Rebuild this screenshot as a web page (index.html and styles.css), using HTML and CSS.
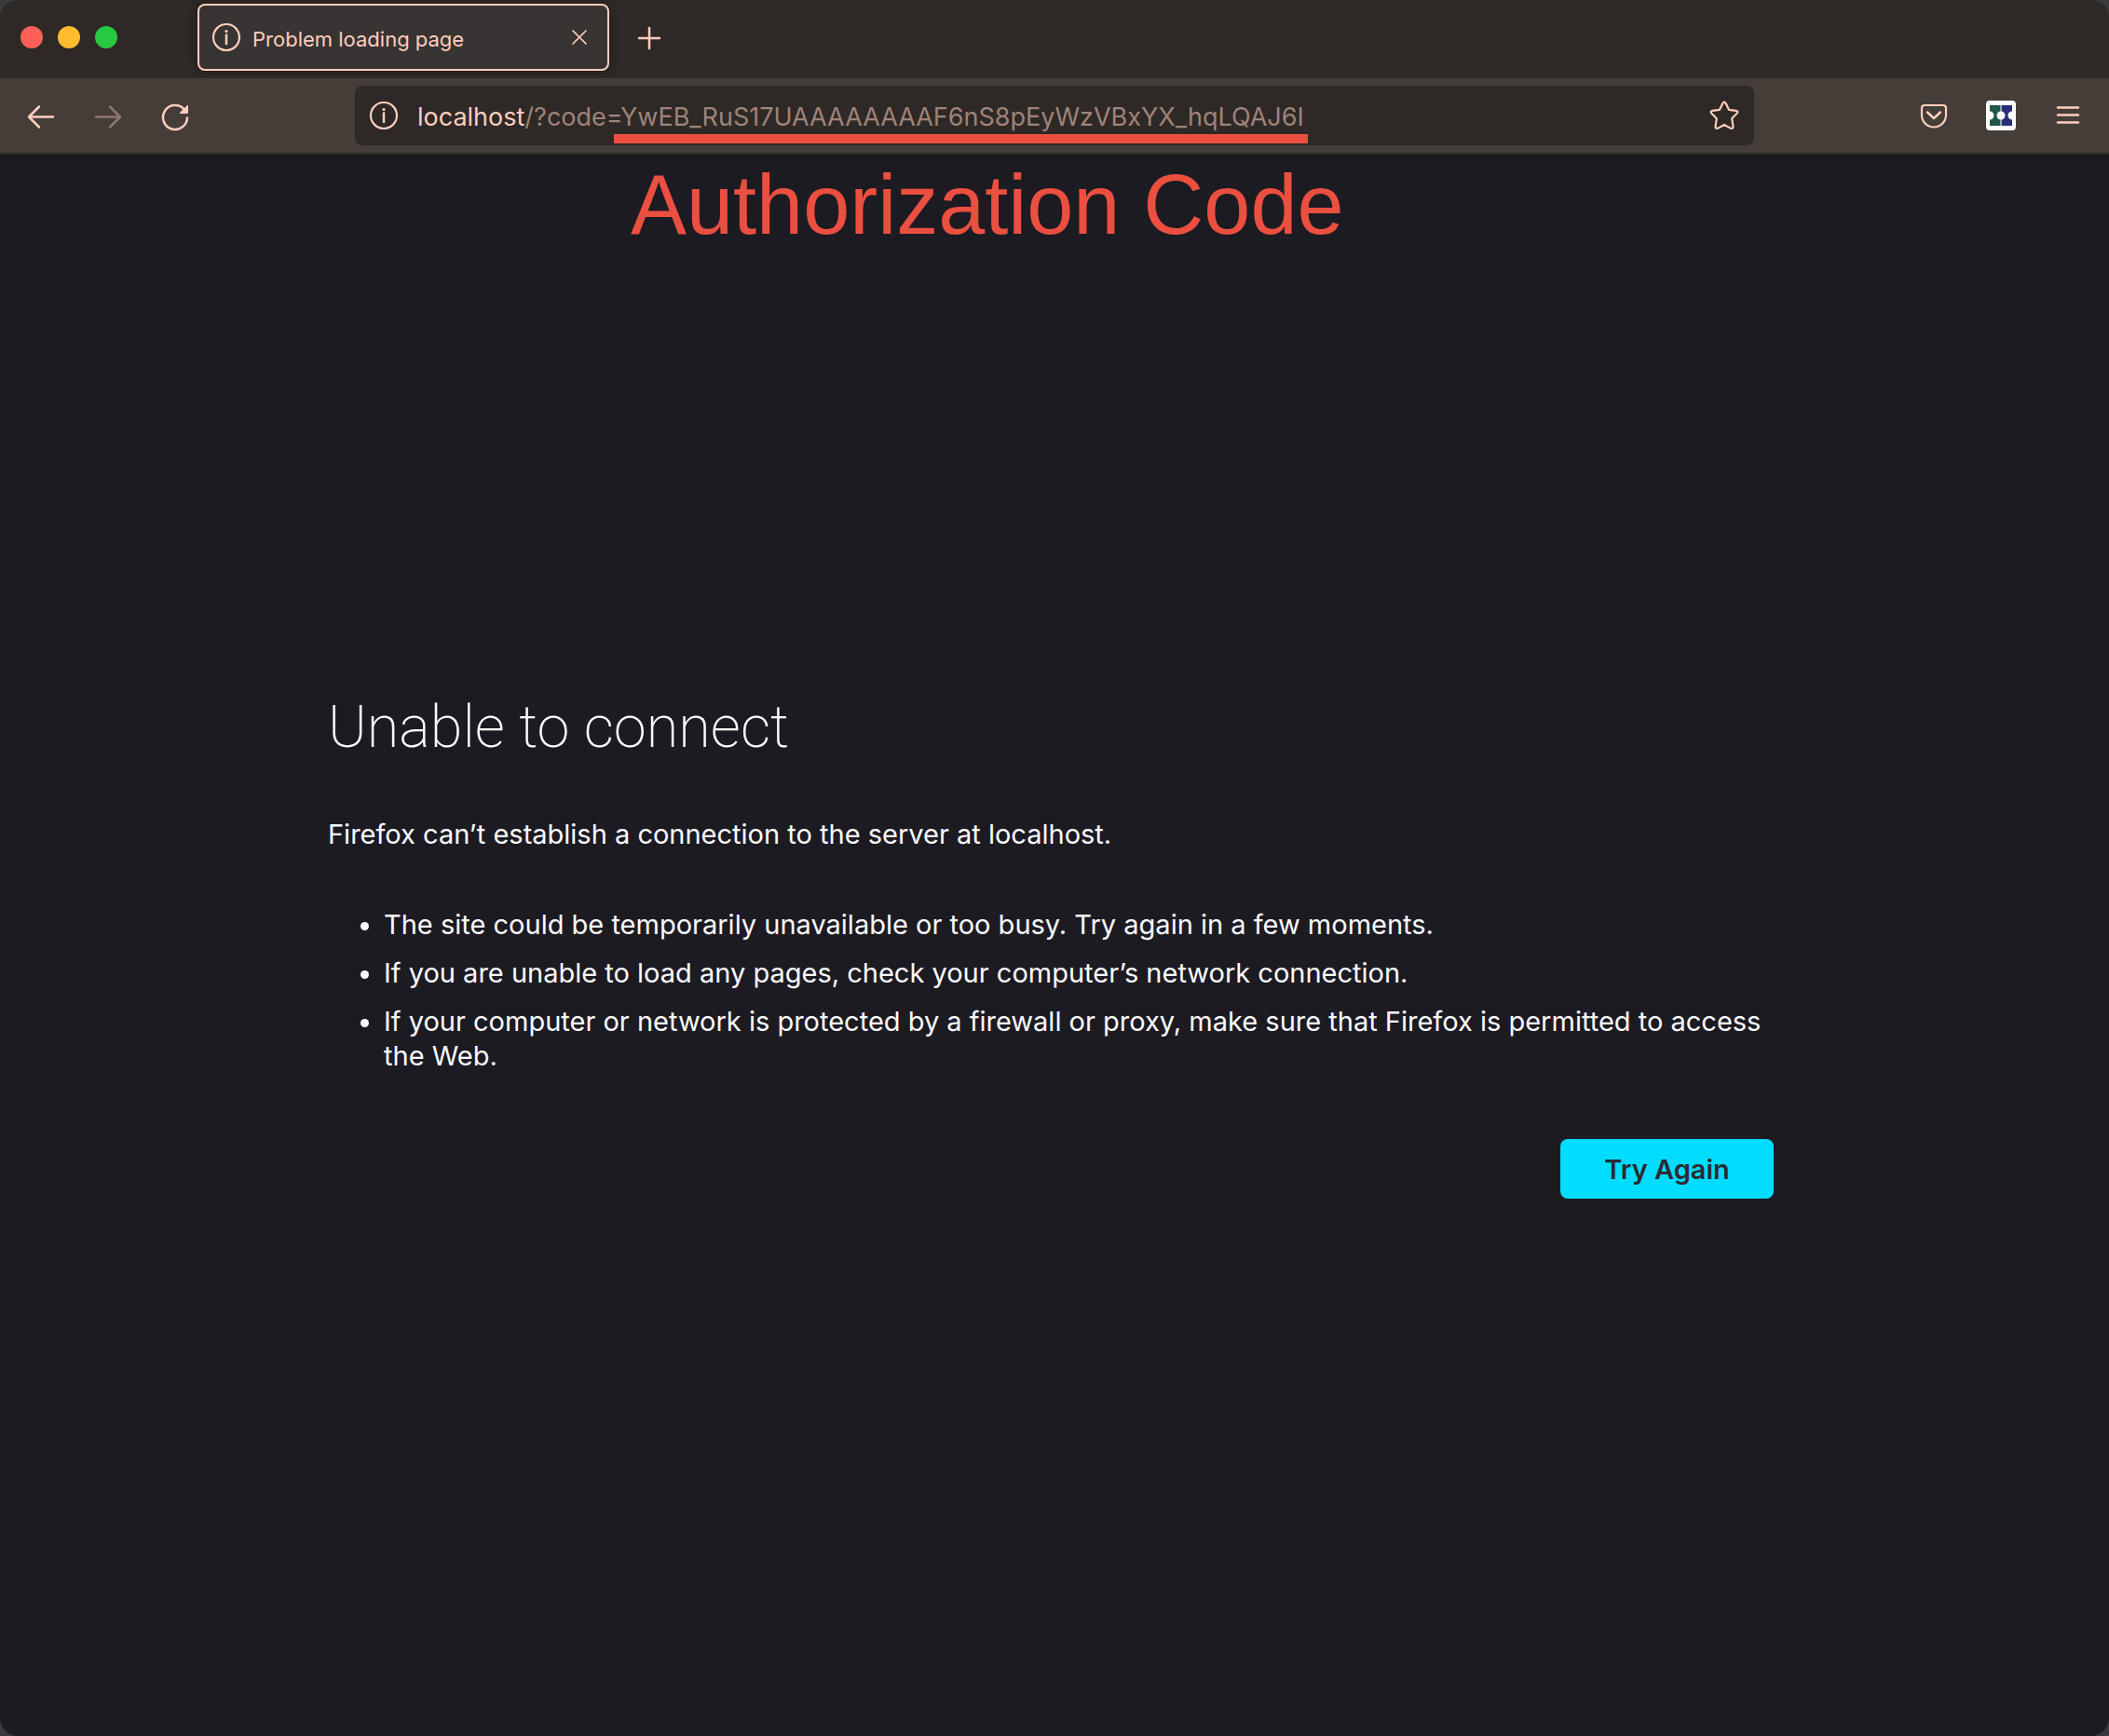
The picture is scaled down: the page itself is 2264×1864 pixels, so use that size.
FILE: index.html
```html
<!DOCTYPE html>
<html lang="en">
<head>
<meta charset="utf-8">
<meta name="viewport" content="width=device-width, initial-scale=1">
<title>Problem loading page</title>
<link rel="stylesheet" href="styles.css">
</head>
<body>
<div class="window">
  <header class="chrome">
    <div class="tab-strip">
      <div class="window-controls">
        <button class="light light-close" type="button" aria-label="Close window"></button>
        <button class="light light-minimize" type="button" aria-label="Minimize window"></button>
        <button class="light light-zoom" type="button" aria-label="Zoom window"></button>
      </div>
      <div class="tab">
        <svg class="icon" viewBox="0 0 32 32" aria-hidden="true"><circle class="thin" cx="16" cy="16" r="14"/><path d="M16 13.500v9.500"/><circle class="fill" cx="16" cy="9.500" r="1.600"/></svg>
        <span class="tab-title">Problem loading page</span>
        <button class="tab-close" type="button" aria-label="Close tab">
          <svg class="icon" viewBox="0 0 32 32" aria-hidden="true"><path class="hairline" d="M9 9l14 14M23 9L9 23"/></svg>
        </button>
      </div>
      <button class="new-tab" type="button" aria-label="New tab">
        <svg class="icon" viewBox="0 0 32 32" aria-hidden="true"><path d="M16 6v22M5 17h22"/></svg>
      </button>
    </div>
    <nav class="toolbar" aria-label="Navigation">
      <button class="tool" type="button" aria-label="Back">
        <svg class="icon" viewBox="0 0 32 32" aria-hidden="true"><path d="M29 17.500H3M14 6.500L3 17.500l11 11"/></svg>
      </button>
      <button class="tool" type="button" aria-label="Forward" disabled>
        <svg class="icon" viewBox="0 0 32 32" aria-hidden="true"><path d="M3 17.500h26M18 6.500l11 11-11 11"/></svg>
      </button>
      <button class="tool" type="button" aria-label="Reload">
        <svg class="icon" viewBox="0 0 32 32" aria-hidden="true"><path d="M29 18.500A13 13 0 1 1 25.200 8.800"/><path class="fill" d="M30 5.500v7.500q0 1-1 1h-7.500q-1.500 0-.5-1l7.800-7.800q1.200-1 1.200.3z"/></svg>
      </button>
      <div class="spacer"></div>
      <div class="url-bar">
        <svg class="icon" viewBox="0 0 32 32" aria-hidden="true"><circle class="thin" cx="16" cy="16" r="14"/><path d="M16 13.500v9.500"/><circle class="fill" cx="16" cy="9.500" r="1.600"/></svg>
        <div class="address">
          <label class="host" for="address">localhost</label>
          <input class="path" id="address" type="text" spellcheck="false" value="/?code=YwEB_RuS17UAAAAAAAAF6nS8pEyWzVBxYX_hqLQAJ6I">
          <span class="underline"></span>
          <p class="annotation">Authorization Code</p>
        </div>
        <button class="bookmark" type="button" aria-label="Bookmark this page">
          <svg class="icon" viewBox="0 0 32 32" aria-hidden="true"><path class="thin" d="M14.200 3.200q1.800-3.200 3.600 0l3.200 6.600 7.600 1q3 .8 1 3l-5.400 5.400 1.300 8.700q-.3 2.900-3 1.700L16 26l-6.500 3.600q-2.700 1.200-3-1.700l1.300-8.700-5.400-5.400q-2-2.200 1-3l7.600-1z"/></svg>
        </button>
      </div>
      <div class="spacer"></div>
      <button class="tool" type="button" aria-label="Save to Pocket">
        <svg class="icon" viewBox="0 0 32 32" aria-hidden="true"><path class="thin" d="M6 5h20q3 0 3 3v7.500a13 13 0 0 1-26 0V8q0-3 3-3z"/><path d="M9 12.500l7 6.500 7-6.500"/></svg>
      </button>
      <button class="tool" type="button" aria-label="Extension">
        <svg class="icon-extension" viewBox="0 0 32 32" aria-hidden="true"><rect width="32" height="32" rx="4" fill="#fff"/><path fill="#225547" d="M4 5h11.500v22H4z"/><path fill="#282d78" d="M16.500 5H28v22H16.500z"/><path fill="#8fa3a8" d="M15.500 5h1v22h-1z"/><circle cx="16" cy="16" r="4.500" fill="#fff"/><path fill="#fff" d="M4 11.500a4.500 4.500 0 0 1 0 9zM28 11.500a4.500 4.500 0 0 0 0 9z"/></svg>
      </button>
      <button class="tool" type="button" aria-label="Open menu">
        <svg class="icon" viewBox="0 0 32 32" aria-hidden="true"><path d="M5 7.500h22M5 15.500h22M5 23.500h22"/></svg>
      </button>
    </nav>
  </header>
  <main class="error-page">
    <div class="error">
      <h1 class="error-title">Unable to connect</h1>
      <p class="error-lead">Firefox can’t establish a connection to the server at localhost.</p>
      <ul class="error-list">
        <li>The site could be temporarily unavailable or too busy. Try again in a few moments.</li>
        <li>If you are unable to load any pages, check your computer’s network connection.</li>
        <li>If your computer or network is protected by a firewall or proxy, make sure that Firefox is permitted to access the Web.</li>
      </ul>
      <div class="error-actions">
        <button class="retry" type="button">Try Again</button>
      </div>
    </div>
  </main>
</div>
</body>
</html>
```
FILE: styles.css
```css
:root {
  --accent: #ffcebd;
  --frame: #2e2926;
  --toolbar: #453d38;
  --page: #1c1b22;
  --mark: #eb4f40;
}

* {
  box-sizing: border-box;
}

body {
  margin: 0;
  background: #3a3a3c;
  font-family: Inter, "Liberation Sans", sans-serif;
}

button {
  margin: 0;
  padding: 0;
  border: 0;
  background: none;
  color: inherit;
  font: inherit;
}

.window {
  display: flex;
  flex-direction: column;
  min-height: 100vh;
  border-radius: 20px;
  overflow: hidden;
  background: var(--page);
}

.icon,
.icon-extension {
  display: block;
  flex: none;
  width: 32px;
  height: 32px;
}

.icon {
  overflow: visible;
  fill: none;
  stroke: var(--accent);
  stroke-width: 2.5;
  stroke-linecap: round;
  stroke-linejoin: round;
}

.icon .fill {
  fill: var(--accent);
  stroke: none;
}

.icon .thin {
  stroke-width: 2.2;
}

.icon .hairline {
  stroke-width: 1.7;
}

.chrome {
  background: var(--frame);
  color: var(--accent);
}

.tab-strip {
  display: flex;
  align-items: center;
  height: 84px;
  padding: 0 22px 4px;
}

.window-controls {
  display: flex;
  gap: 16px;
  margin-right: 86px;
}

.light {
  width: 24px;
  height: 24px;
  border-radius: 50%;
}

.light-close { background: #ff5f57; }
.light-minimize { background: #febc2e; }
.light-zoom { background: #28c840; }

.tab {
  display: flex;
  align-items: center;
  gap: 12px;
  width: 442px;
  height: 72px;
  padding: 0 14px 0 13px;
  border: 2px solid var(--accent);
  border-radius: 8px;
  background: #383433;
  box-shadow: 0 0 8px rgba(0, 0, 0, 0.4);
}

.tab-title {
  flex: 1;
  padding-top: 3px;
  font-size: 22px;
  line-height: 28px;
  white-space: nowrap;
}

.new-tab {
  margin-left: 27px;
}

.toolbar {
  display: flex;
  align-items: center;
  height: 82px;
  padding: 0 8px;
  border-bottom: 2px solid #2c2825;
  background: var(--toolbar);
}

.tool {
  display: grid;
  place-items: center;
  flex: none;
  width: 72px;
  height: 72px;
}

.tool:disabled {
  opacity: 0.4;
}

.spacer {
  flex: 0 1 157px;
}

.url-bar {
  display: flex;
  flex: 1;
  align-items: center;
  min-width: 0;
  height: 64px;
  padding: 0 16px 0 15px;
  border-radius: 8px;
  background: var(--frame);
}

.address {
  position: relative;
  display: flex;
  flex: 1;
  min-width: 0;
  margin: 4px 0 0 20px;
  font-size: 27px;
  line-height: 36px;
}

.path {
  flex: 1;
  min-width: 0;
  padding: 0;
  border: 0;
  outline: 0;
  background: none;
  color: #9f8379;
  font: inherit;
}

.underline {
  position: absolute;
  top: 36px;
  left: 211px;
  width: 745px;
  height: 10px;
  background: var(--mark);
}

.annotation {
  position: absolute;
  top: 60px;
  left: 229px;
  margin: 0;
  color: var(--mark);
  font-family: "Liberation Sans", Arial, sans-serif;
  font-size: 90px;
  line-height: 104px;
  white-space: nowrap;
}

.error-page {
  display: flex;
  flex: 1;
  align-items: center;
  justify-content: center;
  padding-bottom: 4px;
  color: #fbfbfe;
  font-size: 29px;
  line-height: 37px;
}

.error {
  width: 100%;
  max-width: 1560px;
}

.error-title {
  margin: 0 0 54px;
  font-family: Roboto, Inter, sans-serif;
  font-size: 63px;
  font-weight: 200;
  line-height: 84px;
}

.error-lead {
  margin: 0 0 60px;
}

.error-list {
  margin: 0;
  padding-left: 60px;
}

.error-list li + li {
  margin-top: 15px;
}

.error-actions {
  display: flex;
  justify-content: flex-end;
  margin-top: 71px;
  padding-right: 8px;
}

.retry {
  min-width: 229px;
  height: 64px;
  padding: 0 40px;
  border-radius: 8px;
  background: #00ddff;
  color: #2b2a33;
  font-weight: 600;
}
```
